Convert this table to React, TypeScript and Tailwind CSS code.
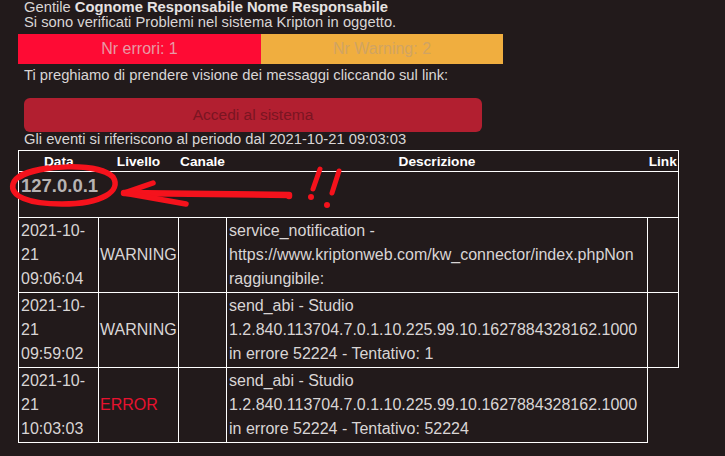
export default function App() {
  const rows = [
    {
      date: ["2021-10-", "21", "09:06:04"],
      level: "WARNING",
      desc: [
        "service_notification -",
        "https://www.kriptonweb.com/kw_connector/index.phpNon",
        "raggiungibile:",
      ],
      link: true,
    },
    {
      date: ["2021-10-", "21", "09:59:02"],
      level: "WARNING",
      desc: [
        "send_abi - Studio",
        "1.2.840.113704.7.0.1.10.225.99.10.1627884328162.1000",
        "in errore 52224 - Tentativo: 1",
      ],
      link: true,
    },
    {
      date: ["2021-10-", "21", "10:03:03"],
      level: "ERROR",
      desc: [
        "send_abi - Studio",
        "1.2.840.113704.7.0.1.10.225.99.10.1627884328162.1000",
        "in errore 52224 - Tentativo: 52224",
      ],
      link: false,
    },
  ];

  return (
    <div className="relative min-h-screen w-full bg-[#221a1b] pl-[18px] font-['Liberation_Sans',Arial,sans-serif] text-[#d9d5d5]">
      <div className="pl-[6px] text-[14.75px] leading-[15px]">
        <div>
          Gentile <b className="text-[#e6e2e2]">Cognome Responsabile Nome Responsabile</b>
        </div>
        <div>Si sono verificati Problemi nel sistema Kripton in oggetto.</div>
      </div>

      <div className="mt-[4px] flex h-[30px] w-[485px] text-[16px]">
        <div className="flex w-[243px] items-center justify-center bg-[#fe0b34] text-[#e99aa5]">
          Nr errori: 1
        </div>
        <div className="flex flex-1 items-center justify-center bg-[#f0ae3f] text-[#d1a462]">
          Nr Warning: 2
        </div>
      </div>

      <div className="mt-[4px] pl-[6px] text-[14.75px] leading-[15px]">
        Ti preghiamo di prendere visione dei messaggi cliccando sul link:
      </div>

      <div className="ml-[6px] mt-[15px] flex h-[34px] w-[458px] items-center justify-center rounded-[6px] bg-[#b21f30] text-[15.5px] text-[#7a1522]">
        Accedi al sistema
      </div>

      <div className="pl-[6px] text-[14.75px] leading-[15px]">
        Gli eventi si riferiscono al periodo dal 2021-10-21 09:03:03
      </div>

      <table className="mt-[3px] w-[660px] table-fixed border-collapse">
        <colgroup>
          <col className="w-[80px]" />
          <col className="w-[80px]" />
          <col className="w-[48px]" />
          <col className="w-[421px]" />
          <col className="w-[31px]" />
        </colgroup>
        <thead>
          <tr className="h-[21px] text-[13.7px] font-bold leading-[17px] text-white">
            <th className="border-y border-l border-white p-0 text-center">Data</th>
            <th className="border-y border-white p-0 text-center">Livello</th>
            <th className="border-y border-white p-0 text-center">Canale</th>
            <th className="border-y border-white p-0 text-center">Descrizione</th>
            <th className="border-y border-r border-white p-0 text-center">Link</th>
          </tr>
        </thead>
        <tbody className="text-[16px] leading-[24px]">
          <tr className="h-[46px]">
            <td
              colSpan={5}
              className="border border-white px-[2px] pt-[3px] align-top text-[18.5px] font-bold leading-[22px] text-[#b7b3b3]"
            >
              127.0.0.1
            </td>
          </tr>
          {rows.map((r, i) => (
            <tr key={i}>
              <td className="border border-white px-[2px] py-[1px] align-top">
                {r.date.map((d, j) => (
                  <div key={j}>{d}</div>
                ))}
              </td>
              <td
                className={`border border-white px-[1px] align-middle ${
                  r.level === "ERROR" ? "text-[#e8122f]" : ""
                }`}
              >
                {r.level}
              </td>
              <td className="border border-white" />
              <td className="border border-white px-[2px] py-[1px] align-top">
                {r.desc.map((d, j) => (
                  <div key={j} className="whitespace-nowrap">
                    {d}
                  </div>
                ))}
              </td>
              {r.link && <td className="border border-white" />}
            </tr>
          ))}
        </tbody>
      </table>

      <svg
        className="pointer-events-none absolute left-0 top-0"
        width="725"
        height="456"
        viewBox="0 0 725 456"
        fill="none"
        stroke="#f5121c"
        strokeLinecap="round"
        strokeLinejoin="round"
      >
        <path
          d="M20 177 C38 165 98 162 113 177 C122 191 102 204 62 204 C28 204 10 196 13 184 C16 174 32 170 48 168"
          strokeWidth="5.5"
        />
        <path d="M124 193 L289 195 L289 196" strokeWidth="6.5" />
        <path d="M153 183 L124 193 L186 204" strokeWidth="5.5" />
        <path d="M320 169 L313 189" strokeWidth="5" />
        <path d="M339 171 L332 193" strokeWidth="5" />
        <circle cx="311" cy="197" r="3" fill="#f5121c" stroke="none" />
        <circle cx="327" cy="205" r="3" fill="#f5121c" stroke="none" />
      </svg>
    </div>
  );
}
